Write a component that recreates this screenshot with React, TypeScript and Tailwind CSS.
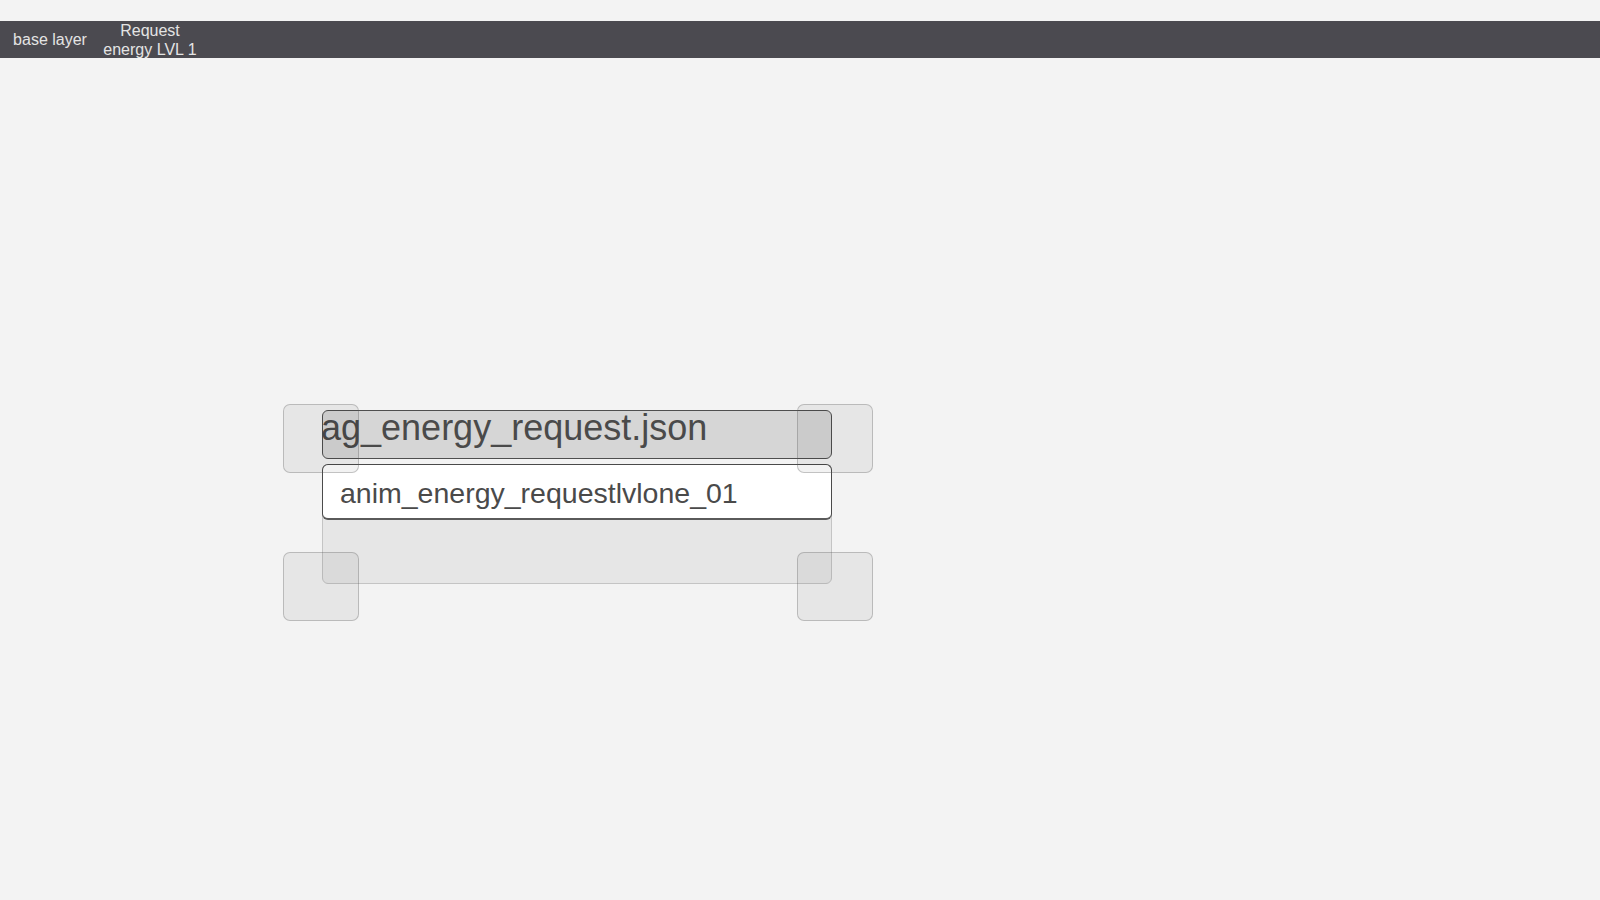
import React from "react";

const Handle = ({ pos }: { pos: string }) => (
  <div
    className={`absolute w-[76px] h-[69px] rounded-[7px] border border-[rgba(90,90,90,0.32)] bg-[rgba(0,0,0,0.05)] ${pos}`}
  />
);

export default function App() {
  return (
    <div
      className="min-h-[900px] w-full bg-[#f3f3f3] pt-[21px]"
      style={{ fontFamily: '"Liberation Sans", Arial, sans-serif' }}
    >
      <div className="flex h-[37px] items-center bg-[#4b4a50] text-[16px] leading-[18.4px] text-[#e4e4e4]">
        <div className="w-[100px] pt-[2px] text-center">base layer</div>
        <div className="w-[100px] pt-[2px] text-center">Request energy LVL 1</div>
      </div>

      <div className="ml-[322px] mt-[352px] relative w-[510px]">
        <div className="h-[49px] rounded-[6px] border border-[#4f4f4f] bg-[#d6d6d6]">
          <div className="-mt-[3px] -ml-[2px] text-[36px] leading-[40px] text-[#4a4a4a] whitespace-nowrap">
            ag_energy_request.json
          </div>
        </div>
        <div className="mt-[5px] h-[120px] rounded-[6px] border border-[#c4c4c4] bg-[#e6e6e6]">
          <div className="-mx-px -mt-px h-[56px] rounded-[6px] border border-[#4a4a4a] border-b-[2px] border-b-[#5a5a5a] bg-white pl-[17px] pt-[2px] text-[28.5px] leading-[52px] text-[#4a4a4a] whitespace-nowrap">
            anim_energy_requestlvlone_01
          </div>
        </div>

        <Handle pos="left-[-39px] top-[-6px]" />
        <Handle pos="left-[475px] top-[-6px]" />
        <Handle pos="left-[-39px] top-[142px]" />
        <Handle pos="left-[475px] top-[142px]" />
      </div>
    </div>
  );
}
